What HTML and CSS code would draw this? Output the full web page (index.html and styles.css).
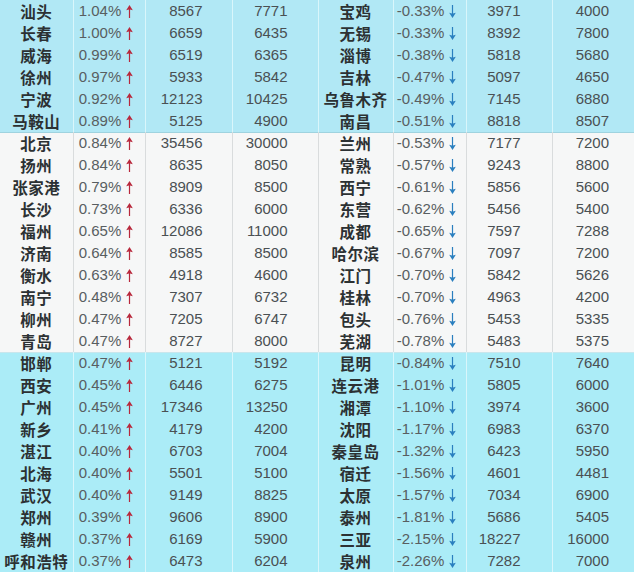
FILE: index.html
```html
<!DOCTYPE html>
<html lang="zh">
<head>
<meta charset="utf-8">
<link rel="stylesheet" href="styles.css">
</head>
<body>
<svg class="defs" width="0" height="0">
  <symbol id="up" viewBox="0 0 7 13"><path d="M3.5 0 L6.8 5.2 L4.1 4.4 L4.1 13 L2.9 13 L2.9 4.4 L0.2 5.2 Z"/></symbol>
  <symbol id="dn" viewBox="0 0 7 13"><path d="M3.5 13 L6.8 7.8 L4.1 8.6 L4.1 0 L2.9 0 L2.9 8.6 L0.2 7.8 Z"/></symbol>
</svg>
<table class="t">
<colgroup>
<col class="w1"><col class="w2"><col class="w3"><col class="w4"><col class="w5"><col class="w6"><col class="w7"><col class="w8">
</colgroup>
<tbody>
<tr class="cy"><td class="c">汕头</td><td class="p">1.04%<svg class="ar up"><use href="#up"/></svg></td><td class="n a">8567</td><td class="n b">7771</td><td class="c">宝鸡</td><td class="p">-0.33%<svg class="ar dn"><use href="#dn"/></svg></td><td class="n c7">3971</td><td class="n c8">4000</td></tr>
<tr class="cy"><td class="c">长春</td><td class="p">1.00%<svg class="ar up"><use href="#up"/></svg></td><td class="n a">6659</td><td class="n b">6435</td><td class="c">无锡</td><td class="p">-0.33%<svg class="ar dn"><use href="#dn"/></svg></td><td class="n c7">8392</td><td class="n c8">7800</td></tr>
<tr class="cy"><td class="c">威海</td><td class="p">0.99%<svg class="ar up"><use href="#up"/></svg></td><td class="n a">6519</td><td class="n b">6365</td><td class="c">淄博</td><td class="p">-0.38%<svg class="ar dn"><use href="#dn"/></svg></td><td class="n c7">5818</td><td class="n c8">5680</td></tr>
<tr class="cy"><td class="c">徐州</td><td class="p">0.97%<svg class="ar up"><use href="#up"/></svg></td><td class="n a">5933</td><td class="n b">5842</td><td class="c">吉林</td><td class="p">-0.47%<svg class="ar dn"><use href="#dn"/></svg></td><td class="n c7">5097</td><td class="n c8">4650</td></tr>
<tr class="cy"><td class="c">宁波</td><td class="p">0.92%<svg class="ar up"><use href="#up"/></svg></td><td class="n a">12123</td><td class="n b">10425</td><td class="c">乌鲁木齐</td><td class="p">-0.49%<svg class="ar dn"><use href="#dn"/></svg></td><td class="n c7">7145</td><td class="n c8">6880</td></tr>
<tr class="cy"><td class="c">马鞍山</td><td class="p">0.89%<svg class="ar up"><use href="#up"/></svg></td><td class="n a">5125</td><td class="n b">4900</td><td class="c">南昌</td><td class="p">-0.51%<svg class="ar dn"><use href="#dn"/></svg></td><td class="n c7">8818</td><td class="n c8">8507</td></tr>
<tr class="wh first"><td class="c">北京</td><td class="p">0.84%<svg class="ar up"><use href="#up"/></svg></td><td class="n a">35456</td><td class="n b">30000</td><td class="c">兰州</td><td class="p">-0.53%<svg class="ar dn"><use href="#dn"/></svg></td><td class="n c7">7177</td><td class="n c8">7200</td></tr>
<tr class="wh"><td class="c">扬州</td><td class="p">0.84%<svg class="ar up"><use href="#up"/></svg></td><td class="n a">8635</td><td class="n b">8050</td><td class="c">常熟</td><td class="p">-0.57%<svg class="ar dn"><use href="#dn"/></svg></td><td class="n c7">9243</td><td class="n c8">8800</td></tr>
<tr class="wh"><td class="c">张家港</td><td class="p">0.79%<svg class="ar up"><use href="#up"/></svg></td><td class="n a">8909</td><td class="n b">8500</td><td class="c">西宁</td><td class="p">-0.61%<svg class="ar dn"><use href="#dn"/></svg></td><td class="n c7">5856</td><td class="n c8">5600</td></tr>
<tr class="wh"><td class="c">长沙</td><td class="p">0.73%<svg class="ar up"><use href="#up"/></svg></td><td class="n a">6336</td><td class="n b">6000</td><td class="c">东营</td><td class="p">-0.62%<svg class="ar dn"><use href="#dn"/></svg></td><td class="n c7">5456</td><td class="n c8">5400</td></tr>
<tr class="wh"><td class="c">福州</td><td class="p">0.65%<svg class="ar up"><use href="#up"/></svg></td><td class="n a">12086</td><td class="n b">11000</td><td class="c">成都</td><td class="p">-0.65%<svg class="ar dn"><use href="#dn"/></svg></td><td class="n c7">7597</td><td class="n c8">7288</td></tr>
<tr class="wh"><td class="c">济南</td><td class="p">0.64%<svg class="ar up"><use href="#up"/></svg></td><td class="n a">8585</td><td class="n b">8500</td><td class="c">哈尔滨</td><td class="p">-0.67%<svg class="ar dn"><use href="#dn"/></svg></td><td class="n c7">7097</td><td class="n c8">7200</td></tr>
<tr class="wh"><td class="c">衡水</td><td class="p">0.63%<svg class="ar up"><use href="#up"/></svg></td><td class="n a">4918</td><td class="n b">4600</td><td class="c">江门</td><td class="p">-0.70%<svg class="ar dn"><use href="#dn"/></svg></td><td class="n c7">5842</td><td class="n c8">5626</td></tr>
<tr class="wh"><td class="c">南宁</td><td class="p">0.48%<svg class="ar up"><use href="#up"/></svg></td><td class="n a">7307</td><td class="n b">6732</td><td class="c">桂林</td><td class="p">-0.70%<svg class="ar dn"><use href="#dn"/></svg></td><td class="n c7">4963</td><td class="n c8">4200</td></tr>
<tr class="wh"><td class="c">柳州</td><td class="p">0.47%<svg class="ar up"><use href="#up"/></svg></td><td class="n a">7205</td><td class="n b">6747</td><td class="c">包头</td><td class="p">-0.76%<svg class="ar dn"><use href="#dn"/></svg></td><td class="n c7">5453</td><td class="n c8">5335</td></tr>
<tr class="wh"><td class="c">青岛</td><td class="p">0.47%<svg class="ar up"><use href="#up"/></svg></td><td class="n a">8727</td><td class="n b">8000</td><td class="c">芜湖</td><td class="p">-0.78%<svg class="ar dn"><use href="#dn"/></svg></td><td class="n c7">5483</td><td class="n c8">5375</td></tr>
<tr class="cy2 first"><td class="c">邯郸</td><td class="p">0.47%<svg class="ar up"><use href="#up"/></svg></td><td class="n a">5121</td><td class="n b">5192</td><td class="c">昆明</td><td class="p">-0.84%<svg class="ar dn"><use href="#dn"/></svg></td><td class="n c7">7510</td><td class="n c8">7640</td></tr>
<tr class="cy2"><td class="c">西安</td><td class="p">0.45%<svg class="ar up"><use href="#up"/></svg></td><td class="n a">6446</td><td class="n b">6275</td><td class="c">连云港</td><td class="p">-1.01%<svg class="ar dn"><use href="#dn"/></svg></td><td class="n c7">5805</td><td class="n c8">6000</td></tr>
<tr class="cy2"><td class="c">广州</td><td class="p">0.45%<svg class="ar up"><use href="#up"/></svg></td><td class="n a">17346</td><td class="n b">13250</td><td class="c">湘潭</td><td class="p">-1.10%<svg class="ar dn"><use href="#dn"/></svg></td><td class="n c7">3974</td><td class="n c8">3600</td></tr>
<tr class="cy2"><td class="c">新乡</td><td class="p">0.41%<svg class="ar up"><use href="#up"/></svg></td><td class="n a">4179</td><td class="n b">4200</td><td class="c">沈阳</td><td class="p">-1.17%<svg class="ar dn"><use href="#dn"/></svg></td><td class="n c7">6983</td><td class="n c8">6370</td></tr>
<tr class="cy2"><td class="c">湛江</td><td class="p">0.40%<svg class="ar up"><use href="#up"/></svg></td><td class="n a">6703</td><td class="n b">7004</td><td class="c">秦皇岛</td><td class="p">-1.32%<svg class="ar dn"><use href="#dn"/></svg></td><td class="n c7">6423</td><td class="n c8">5950</td></tr>
<tr class="cy2"><td class="c">北海</td><td class="p">0.40%<svg class="ar up"><use href="#up"/></svg></td><td class="n a">5501</td><td class="n b">5100</td><td class="c">宿迁</td><td class="p">-1.56%<svg class="ar dn"><use href="#dn"/></svg></td><td class="n c7">4601</td><td class="n c8">4481</td></tr>
<tr class="cy2"><td class="c">武汉</td><td class="p">0.40%<svg class="ar up"><use href="#up"/></svg></td><td class="n a">9149</td><td class="n b">8825</td><td class="c">太原</td><td class="p">-1.57%<svg class="ar dn"><use href="#dn"/></svg></td><td class="n c7">7034</td><td class="n c8">6900</td></tr>
<tr class="cy2"><td class="c">郑州</td><td class="p">0.39%<svg class="ar up"><use href="#up"/></svg></td><td class="n a">9606</td><td class="n b">8900</td><td class="c">泰州</td><td class="p">-1.81%<svg class="ar dn"><use href="#dn"/></svg></td><td class="n c7">5686</td><td class="n c8">5405</td></tr>
<tr class="cy2"><td class="c">赣州</td><td class="p">0.37%<svg class="ar up"><use href="#up"/></svg></td><td class="n a">6169</td><td class="n b">5900</td><td class="c">三亚</td><td class="p">-2.15%<svg class="ar dn"><use href="#dn"/></svg></td><td class="n c7">18227</td><td class="n c8">16000</td></tr>
<tr class="cy2"><td class="c">呼和浩特</td><td class="p">0.37%<svg class="ar up"><use href="#up"/></svg></td><td class="n a">6473</td><td class="n b">6204</td><td class="c">泉州</td><td class="p">-2.26%<svg class="ar dn"><use href="#dn"/></svg></td><td class="n c7">7282</td><td class="n c8">7000</td></tr>
</tbody>
</table>
</body>
</html>
```

FILE: styles.css
```css
html, body {
  margin: 0;
  padding: 0;
  background: #abecf7;
}
.defs {
  position: absolute;
  width: 0;
  height: 0;
  overflow: hidden;
}
.t {
  width: 634px;
  table-layout: fixed;
  border-collapse: collapse;
  border-spacing: 0;
  font-family: "Liberation Sans", Arial, "Noto Sans CJK SC", sans-serif;
  font-size: 15px;
}
.w1 { width: 73px; }
.w2 { width: 72px; }
.w3 { width: 87px; }
.w4 { width: 86px; }
.w5 { width: 75px; }
.w6 { width: 73px; }
.w7 { width: 86px; }
.w8 { width: 82px; }

.t td {
  height: 22px;
  padding: 0;
  line-height: 22px;
  white-space: nowrap;
  overflow: hidden;
  border-left: 1px solid rgba(255, 255, 255, 0.55);
}
.t td:first-child { border-left: none; }

.cy { background: #b1e8f5; }
.cy2 { background: #abecf7; }
.wh { background: #f6f7f7; }
.wh td { border-left-color: #d9dcdd; }
.wh.first td { box-shadow: inset 0 1px 0 #9fd3df; }
.cy2.first td { box-shadow: inset 0 1px 0 #c9e6ec; }

.c {
  text-align: center;
  font-family: "Noto Sans CJK SC", sans-serif;
  font-weight: 700;
  font-size: 15.5px;
  color: #2c3133;
  letter-spacing: 0.5px;
}
.p {
  text-align: center;
  padding-right: 6px !important;
  color: #585e61;
}
.n {
  text-align: right;
  color: #4a5053;
}
.n.a { padding-right: 29px !important; }
.n.b { padding-right: 30px !important; }
.n.c7 { padding-right: 31px !important; }
.n.c8 { padding-right: 25px !important; }

.ar {
  width: 7px;
  height: 13px;
  margin-left: 5px;
  vertical-align: -2px;
}
.ar.up { fill: #b8283c; }
.ar.dn { fill: #2a7fbf; }
```
